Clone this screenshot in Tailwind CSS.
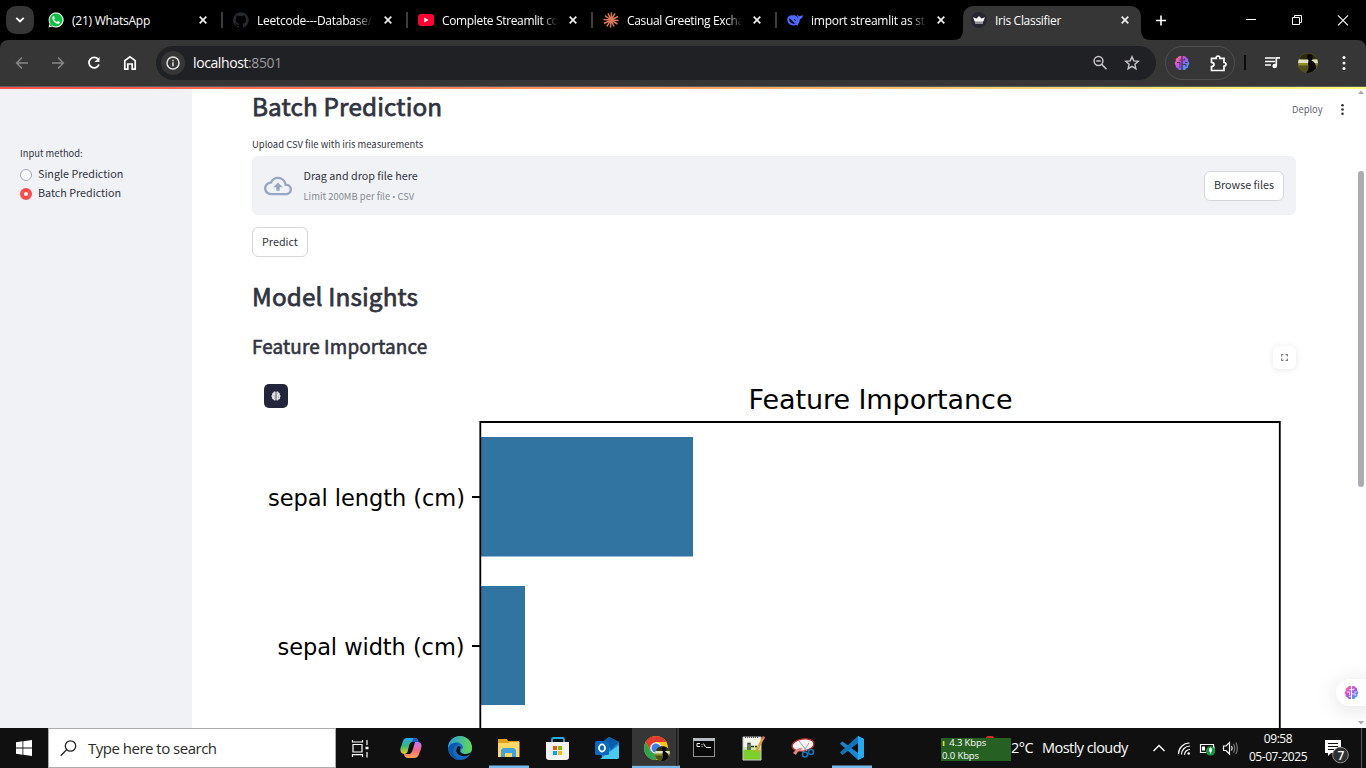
<!DOCTYPE html>
<html lang="en">
<head>
<meta charset="utf-8">
<title>Iris Classifier</title>
<script src="https://cdn.jsdelivr.net/npm/@tailwindcss/browser@4"></script>
</head>
<body class="w-[1366px] h-[768px] overflow-hidden bg-black font-['Open_Sans','Noto_Sans',sans-serif]">
<svg class="absolute w-0 h-0">
  <defs>
    <linearGradient id="brainG" x1="0" y1="0" x2="1" y2="1"><stop offset="0" stop-color="#ff7a3c"/><stop offset=".35" stop-color="#d83fe0"/><stop offset=".65" stop-color="#7d5cf5"/><stop offset="1" stop-color="#2bb5ff"/></linearGradient>
    <linearGradient id="brainH" gradientUnits="userSpaceOnUse" x1="1" y1="2" x2="15" y2="14"><stop offset="0" stop-color="#ff8a3c"/><stop offset=".3" stop-color="#e04fd8"/><stop offset=".55" stop-color="#9a5cf5"/><stop offset="1" stop-color="#2bb5ff"/></linearGradient>
    <symbol id="x" viewBox="0 0 8 8"><path d="M.7.7l6.6 6.6M7.3.7L.7 7.3" stroke="#eee" stroke-width="1.7" fill="none"/></symbol>
    <symbol id="brain" viewBox="0 0 16 16"><path d="M7.400 1.200C5.600.5 4 1.300 3.700 2.700 2 3 1.300 4.700 2 6 .4 7 .3 9.200 1.700 10.200 1.400 12 2.500 13.200 4 13.400 4.600 15 6.300 15.500 7.400 14.600ZM8.600 1.200C10.400.5 12 1.300 12.300 2.700 14 3 14.700 4.700 14 6 15.600 7 15.700 9.200 14.300 10.200 14.600 12 13.500 13.200 12 13.400 11.400 15 9.700 15.500 8.600 14.600Z"/></symbol>
    <symbol id="folds" viewBox="0 0 16 16"><path d="M7.400 5H5.500M3 7.500H6v3M7.400 12H5M8.600 5H10.500V3.500M13.500 7.500H11M8.600 9.500H12v2" fill="none" stroke-width=".9"/></symbol>
    <symbol id="avatar" viewBox="0 0 20 20"><circle cx="10" cy="10" r="10" fill="#8f8c2c"/><path d="M1 6A10 10 0 0 1 19 6L14 7 4 7Z" fill="#2c2c10"/><path d="M.8 6.500H19.200L20 10H0Z" fill="#e2e2c0"/><path d="M.3 12.500H19.700A10 10 0 0 1 .3 12.500Z" fill="#54501a"/><path d="M9.500 2Q13-.5 14.500 3 15 6 13.500 7.500 18 9 18 15A10 10 0 0 1 8 19.800Q12 16 10 11L10.500 7Q8.500 5 9.500 2Z" fill="#0b090b"/></symbol>
  </defs>
</svg>
<div class="flex flex-col h-[768px]">

  <!-- Tab strip -->
  <header class="h-10 flex items-stretch bg-black text-white text-[12px] shrink-0">
    <div class="w-[38px] pl-[6px] pt-[6px] shrink-0"><div class="w-7 h-7 rounded-[10px] bg-[#363636] flex items-center justify-center"><svg width="10" height="6" viewBox="0 0 10 6"><path d="M1.300.8L5 4.500 8.700.8" stroke="#fff" stroke-width="1.800" fill="none"/></svg></div></div>

    <div class="w-[185px] shrink-0 flex items-center pl-[10px] relative">
      <svg class="w-4 h-4 shrink-0" viewBox="0 0 16 16"><path d="M.5 15.500L1.600 11.700A7.500 7.500 0 1 1 4.400 14.500Z" fill="#fff"/><path d="M1.800 14.200L2.500 11.500A6.500 6.500 0 1 1 4.600 13.500Z" fill="#0fc143"/><path d="M5.300 4.100Q4 5 4.400 6.800C5.200 9.500 7.500 11.600 10 11.900Q11.700 11.700 11.900 9.900L10 8.900 9 10Q7 9.200 6 7.200L6.800 6.200 6 4.100Z" fill="#fff"/></svg>
      <span class="ml-2 w-[117px] h-5 leading-[22px] whitespace-nowrap tracking-[-0.250px]">(21) WhatsApp</span>
      <svg class="w-2 h-2 ml-[10px] shrink-0"><use href="#x"/></svg>
      <i class="absolute right-0 top-3 w-[2px] h-4 bg-[#3c3c3c]"></i>
    </div>
    <div class="w-[185px] shrink-0 flex items-center pl-[10px] relative">
      <svg class="w-4 h-4 shrink-0" viewBox="0 0 16 16" fill="#24292f"><path d="M8 .2a8 8 0 0 0-2.500 15.600c.4.1.5-.2.500-.4v-1.500c-2 .4-2.700-.5-2.900-1-.1-.300-.5-1-.8-1.200-.3-.1-.7-.5 0-.5.6 0 1.100.6 1.200.8.700 1.200 1.900.9 2.400.7.1-.5.300-.9.500-1.100-1.800-.2-3.600-.9-3.600-3.900 0-.9.300-1.600.8-2.100-.1-.2-.4-1 .1-2.100 0 0 .7-.2 2.200.8a7.500 7.500 0 0 1 4 0c1.500-1 2.200-.8 2.200-.8.4 1.100.2 1.900.1 2.100.5.600.8 1.300.8 2.100 0 3.100-1.900 3.700-3.700 3.900.3.300.6.7.6 1.500v2.200c0 .2.100.5.6.4A8 8 0 0 0 8 .2Z"/></svg>
      <span class="ml-2 w-[117px] h-5 leading-[22px] overflow-hidden whitespace-nowrap tracking-[-0.250px] [mask-image:linear-gradient(90deg,#000_84%,transparent_99%)]">Leetcode---Database/</span>
      <svg class="w-2 h-2 ml-[10px] shrink-0"><use href="#x"/></svg>
      <i class="absolute right-0 top-3 w-[2px] h-4 bg-[#3c3c3c]"></i>
    </div>
    <div class="w-[185px] shrink-0 flex items-center pl-[10px] relative">
      <svg class="w-4 h-4 shrink-0" viewBox="0 0 16 16"><rect y="2" width="16" height="12" rx="3" fill="#ff0033"/><path d="M6.300 5.500L10.500 8 6.300 10.500Z" fill="#fff"/></svg>
      <span class="ml-2 w-[117px] h-5 leading-[22px] overflow-hidden whitespace-nowrap tracking-[-0.350px] [mask-image:linear-gradient(90deg,#000_84%,transparent_99%)]">Complete Streamlit co</span>
      <svg class="w-2 h-2 ml-[10px] shrink-0"><use href="#x"/></svg>
      <i class="absolute right-0 top-3 w-[2px] h-4 bg-[#3c3c3c]"></i>
    </div>
    <div class="w-[184px] shrink-0 flex items-center pl-[10px] relative">
      <svg class="w-4 h-4 shrink-0" viewBox="0 0 16 16"><path d="M8 8L8.500.4M8 8L12 1.500M8 8L15 4.500M8 8L15.600 8.500M8 8L14.500 12M8 8L11 14.500M8 8L7.500 15.600M8 8L3.800 14.300M8 8L1 11.500M8 8L.4 7.500M8 8L2 3.700M8 8L5 1.200" stroke="#d97757" stroke-width="1.500"/></svg>
      <span class="ml-2 w-[117px] h-5 leading-[22px] overflow-hidden whitespace-nowrap tracking-[-0.350px] [mask-image:linear-gradient(90deg,#000_84%,transparent_99%)]">Casual Greeting Excha</span>
      <svg class="w-2 h-2 ml-[9px] shrink-0"><use href="#x"/></svg>
      <i class="absolute right-0 top-3 w-[2px] h-4 bg-[#3c3c3c]"></i>
    </div>
    <div class="w-[184px] shrink-0 flex items-center pl-[10px]">
      <svg class="w-4 h-4 shrink-0" viewBox="0 0 16 16"><path d="M.2 7.500C.2 4.500 3 2.800 6 3.300 7 3.400 7.500 3 8.500 3.500 10 4.300 10.500 6 11.500 6.500 11 5 9.500 4 10.500 2.500L12 4.200 15.900 3.300C15.800 5.500 14.500 7 12.800 7.400 12.700 9.500 12 11.300 10.800 12.300L11.500 13.400 9 13C4.500 14.500.4 12 .2 7.500Z" fill="#4d6bfe"/><path d="M2 6.500C4.500 6.800 6 10.500 8.800 11.600 4.500 12.400 2 10 2 6.500ZM6.800 7Q8.500 6.800 9 9Q7.500 9 6.800 7Z" fill="#05091c"/></svg>
      <span class="ml-2 w-[117px] h-5 leading-[22px] overflow-hidden whitespace-nowrap tracking-[-0.250px] [mask-image:linear-gradient(90deg,#000_84%,transparent_99%)]">import streamlit as st</span>
      <svg class="w-2 h-2 ml-[9px] shrink-0"><use href="#x"/></svg>
    </div>

    <div class="w-[178px] mt-[6px] ml-[2px] shrink-0 rounded-t-[10px] bg-[#363636] flex items-center pl-2 pb-[6px] relative">
      <svg class="absolute -left-[10px] bottom-0 w-[10px] h-[10px]" viewBox="0 0 10 10"><path d="M10 0V10H0Q10 10 10 0Z" fill="#363636"/></svg>
      <svg class="absolute -right-[10px] bottom-0 w-[10px] h-[10px]" viewBox="0 0 10 10"><path d="M0 0V10H10Q0 10 0 0Z" fill="#363636"/></svg>
      <svg class="w-4 h-4 shrink-0" viewBox="0 0 16 16"><circle cx="8" cy="8" r="8" fill="#262730"/><path d="M2 5.200L5.500 6.500 8 4 10.500 6.500 14 5.200 12.200 9.800H3.800ZM4 10.500H12V11.500H4Z" fill="#f3f3f5"/></svg>
      <span class="ml-2 w-[117px] h-5 leading-[22px] whitespace-nowrap tracking-[-0.300px]">Iris Classifier</span>
      <svg class="w-2 h-2 ml-[9px] shrink-0"><use href="#x"/></svg>
    </div>
    <svg class="w-[225px] h-10 shrink-0" viewBox="1141 0 225 40" fill="none" stroke="#fff"><path d="M1156 20.500H1166M1161 15.500V25.500" stroke-width="1.600"/><path d="M1246 19.500H1256"/><path d="M1292.500 17.500H1299.500V24.500H1292.500ZM1294.500 17V15.500H1301.500V22.500H1300"/><path d="M1338 15.300L1348 25.300M1348 15.300L1338 25.300" stroke-width="1.100"/></svg>
  </header>

  <!-- Toolbar -->
  <nav class="h-[46px] shrink-0 bg-[#363636] rounded-t-lg flex items-center">
    <svg class="w-[156px] h-[46px] shrink-0" viewBox="0 40 156 46" fill="none"><path d="M28 63H17M22 57.500L16.700 63 22 68.500M52 63H63M58 57.500L63.300 63 58 68.500" stroke="#858585" stroke-width="1.600"/><path d="M98.400 59.600A5.200 5.200 0 1 0 99 64.500" stroke="#fff" stroke-width="1.800"/><path d="M99.500 57V62H94.500Z" fill="#fff"/><path d="M124.800 69.200V60.600L130 56.700 135.200 60.600V69.200H132.200V64H127.800V69.200Z" stroke="#fff" stroke-width="1.700"/></svg>
    <div class="w-[1000px] h-[34px] shrink-0 rounded-full bg-[#202124] flex items-center pl-[5px] pr-4">
      <span class="w-6 h-6 rounded-full bg-[#363636] flex items-center justify-center"><svg width="14" height="14" viewBox="0 0 14 14" fill="none" stroke="#e3e3e3" stroke-width="1.500"><circle cx="7" cy="7" r="6"/><path d="M7 6.300V10.200M7 3.800V5.200"/></svg></span>
      <span class="ml-[8px] text-[14px] leading-5 tracking-[-0.400px] text-white">localhost<span class="text-[#9a9b9d]">:8501</span></span>
      <svg class="ml-auto w-4 h-4" viewBox="0 0 16 16" fill="none" stroke="#c7c7c7" stroke-width="1.500"><circle cx="6.500" cy="6" r="4.400"/><path d="M9.700 9.400L14.500 14.200M4.300 6H8.700"/></svg>
      <svg class="ml-4 w-4 h-4" viewBox="0 0 16 16" fill="none" stroke="#c7c7c7" stroke-width="1.400"><path d="M8 1.800L9.800 5.900 14.300 6.300 10.900 9.300 11.900 13.700 8 11.400 4.100 13.700 5.100 9.300 1.700 6.300 6.200 5.900Z"/></svg>
    </div>
    <div class="ml-[9px] w-[70px] h-[34px] shrink-0 rounded-full border border-[#4f4f4f] flex items-center justify-between pl-2 pr-[7px]">
      <svg class="w-4 h-4" viewBox="0 0 16 16" fill="url(#brainH)" stroke="#363636"><use href="#brain" width="16" height="16" stroke="none"/><use href="#folds" width="16" height="16"/></svg>
      <svg class="w-[17px] h-[17px]" viewBox="0 0 17 17"><path d="M1.500 3.300H6.200Q5.800 1.200 8 1.200T9.800 3.300H14V7.500Q16 7.600 16 9.300T14 11.200V15.500H1.500V11.500Q4 11.300 4 9.400T1.500 7.300Z" fill="none" stroke="#fff" stroke-width="1.700"/></svg>
    </div>
    <svg class="w-[131px] h-[46px]" viewBox="1235 40 131 46"><path d="M1245 55V70" stroke="#0c0c0c" stroke-width="2"/><path d="M1265 58H1275M1265 61.500H1275M1265 65H1271" stroke="#fff" stroke-width="1.500"/><path d="M1276.300 66V57.800H1280" stroke="#fff" stroke-width="1.700" fill="none"/><circle cx="1274.700" cy="66" r="2.300" fill="#fff"/><use href="#avatar" x="1298" y="53" width="20" height="20"/><g fill="#fff"><circle cx="1344" cy="57.600" r="1.500"/><circle cx="1344" cy="63" r="1.500"/><circle cx="1344" cy="68.400" r="1.500"/></g></svg>
  </nav>
  <div class="h-px shrink-0 bg-[#5d5d5d]"></div>
  <div class="h-[2px] shrink-0 bg-[linear-gradient(90deg,#ff4b4b,#fffd80)]"></div>

  <!-- Streamlit page -->
  <div class="h-[639px] shrink-0 flex bg-white text-[#31333f] font-['Noto_Sans_CJK_SC',sans-serif] overflow-hidden relative">
    <aside class="w-48 bg-[#f0f2f6] shrink-0 pl-5 pt-[55px] flex flex-col">
      <div class="text-[9.400px] leading-[18px]">Input method:</div>
      <div class="flex items-center mt-[3px] h-[19px] text-[10.750px]"><i class="w-3 h-3 rounded-full border border-[#a3a8b4] bg-white/60 mr-[6px]"></i>Single Prediction</div>
      <div class="flex items-center h-[19px] text-[10.750px]"><i class="w-3 h-3 rounded-full border-4 border-[#ff4b4b] bg-white mr-[6px]"></i>Batch Prediction</div>
    </aside>
    <main class="ml-[60px] w-[1044px] shrink-0 flex flex-col items-start">
      <h2 class="h-9 leading-[34px] text-[24.300px] tracking-[0.150px] font-normal [-webkit-text-stroke:0.750px_#31333f]">Batch Prediction</h2>
      <label class="mt-[10px] h-[18px] leading-[18px] text-[9.430px]">Upload CSV file with iris measurements</label>
      <section class="mt-[3px] w-full h-[59px] rounded-md bg-[#f0f2f6] flex items-center px-3">
        <svg class="w-[28px] h-[28px]" viewBox="0 0 24 24" fill="#97a6c3"><path d="M19.350 10.040A7.490 7.490 0 0 0 12 4C9.110 4 6.600 5.640 5.350 8.040A5.994 5.994 0 0 0 0 14c0 3.310 2.690 6 6 6h13c2.760 0 5-2.240 5-5 0-2.640-2.050-4.780-4.650-4.960zM19 18H6c-2.210 0-4-1.790-4-4 0-2.050 1.530-3.760 3.560-3.970l1.070-.11.5-.95A5.469 5.469 0 0 1 12 6c2.620 0 4.880 1.860 5.390 4.430l.3 1.500 1.530.11A2.980 2.980 0 0 1 22 15c0 1.650-1.350 3-3 3zM8 13h2.550v3h2.900v-3H16l-4-4z"/></svg>
        <div class="ml-[11.500px] pb-px"><div class="text-[10.750px] h-5 leading-5">Drag and drop file here</div><div class="text-[9.430px] h-[18px] leading-5 text-[#31333f]/60">Limit 200MB per file <span class="font-['Roboto'] text-[9px]">•</span> CSV</div></div>
        <button class="ml-auto w-20 h-[30px] rounded-md border border-[#d6d6d9] bg-white text-[10.750px] leading-4 pb-px whitespace-nowrap">Browse files</button>
      </section>
      <button class="mt-3 w-14 h-[30px] rounded-md border border-[#d6d6d9] bg-white text-[10.750px] leading-4 pb-px">Predict</button>
      <h2 class="mt-[22px] h-9 leading-[34px] text-[24.300px] tracking-[0.150px] font-normal [-webkit-text-stroke:0.750px_#31333f]">Model Insights</h2>
      <h3 class="mt-[18px] h-7 leading-[26px] text-[18.900px] tracking-[0.130px] font-normal [-webkit-text-stroke:0.600px_#31333f]">Feature Importance</h3>
      <svg class="mt-[15px] w-[1044px] h-[352px] shrink-0" viewBox="252 376 1044 352" font-family="DejaVu Sans, sans-serif">
        <path d="M480 437H693V556.500H480ZM480 586H525V705H480Z" fill="#3274a1"/>
        <path d="M480.300 740V422H1279.800V740M472 497H480M472 646H480" fill="none" stroke="#000" stroke-width="1.800"/>
        <text x="748.500" y="409" font-size="27" textLength="264">Feature Importance</text>
        <text x="268" y="506" font-size="22.500" textLength="197">sepal length (cm)</text>
        <text x="277.500" y="655" font-size="22.500" textLength="187">sepal width (cm)</text>
      </svg>
    </main>
    <div class="absolute left-[1292px] top-[11px] text-[9.400px] leading-[18px] text-[#31333f]/80">Deploy</div>
    <svg class="absolute left-[1340px] top-[14px] w-[5px] h-[13px]" viewBox="0 0 5 13" fill="#31333f"><circle cx="2.500" cy="2.300" r="1.300"/><circle cx="2.500" cy="6.500" r="1.300"/><circle cx="2.500" cy="10.700" r="1.300"/></svg>
    <div class="absolute left-[1273px] top-[257px] w-[23px] h-[23px] rounded-md bg-white shadow-[0_1px_6px_rgba(0,0,0,0.10)] flex items-center justify-center"><svg width="7" height="7" viewBox="0 0 8 8" fill="none" stroke="#77787f" stroke-width="1.200"><path d="M.7 2.800V.7H2.800M5.200.7H7.300V2.800M7.300 5.200V7.300H5.200M2.800 7.300H.7V5.200"/></svg></div>
    <div class="absolute left-[264px] top-[295px] w-6 h-6 rounded-[5px] bg-[#23253a] flex items-center justify-center"><svg class="w-[10px] h-[10px]" fill="#e6e6ea" stroke="#a5a6b2"><use href="#brain" stroke="none"/><use href="#folds"/></svg></div>
    <div class="absolute left-[1336px] top-[590px] w-[40px] h-[27px] rounded-full bg-white shadow-[0_3px_22px_rgba(0,0,0,0.13)] pl-2 flex items-center"><svg class="w-[15px] h-[15px]" viewBox="0 0 16 16" fill="url(#brainH)" stroke="#fff"><use href="#brain" width="16" height="16" stroke="none"/><use href="#folds" width="16" height="16"/></svg></div>
    <svg class="absolute left-[1357px] top-0 w-[9px] h-[639px]" viewBox="1357 89 9 639" fill="#a9a9ad"><path d="M1358 94L1361 90.500 1364 94ZM1358 721H1364L1361 724.500Z"/><rect x="1358" y="171" width="6" height="316" rx="3" fill="#adadb1"/></svg>
  </div>

  <!-- Taskbar -->
  <footer class="h-10 shrink-0 bg-[#101010] flex items-stretch text-white">
    <div class="w-12 flex items-center justify-center"><svg width="16" height="16" viewBox="0 0 16 16" fill="#fff"><path d="M0 2.200L6.500 1.300V7.500H0ZM7.300 1.200L16 0V7.500H7.300ZM0 8.400H6.500V14.700L0 13.800ZM7.300 8.400H16V16L7.300 14.800Z"/></svg></div>
    <div class="w-72 bg-white border border-[#adadad] flex items-center pl-[11px] text-[#2b2b2b]"><svg width="17" height="17" viewBox="0 0 17 17" fill="none" stroke="#222" stroke-width="1.300"><circle cx="10.500" cy="6" r="5.200"/><path d="M6.600 9.800L.7 15.800"/></svg><span class="ml-[11px] text-[15px] leading-5 tracking-[-0.500px]">Type here to search</span></div>
    <svg class="w-[549px] h-10 shrink-0" viewBox="336 728 549 40">
      <g fill="none" stroke="#fff" stroke-width="1.200"><path d="M353 744.500H362V752H353ZM352.500 740V742H362.500V740M352.500 757V754.700H362.500V757M367 740V745M367 752V757.500"/><path d="M365.500 748H368.500" stroke-width="2.500"/></g>
      <defs><linearGradient id="c1" x2="0" y2="1"><stop stop-color="#2aa8f2"/><stop offset=".5" stop-color="#35b77a"/><stop offset="1" stop-color="#f2d322"/></linearGradient><linearGradient id="c2" x2="0" y2="1"><stop stop-color="#c079f5"/><stop offset=".5" stop-color="#f36a8c"/><stop offset="1" stop-color="#ffa14d"/></linearGradient><linearGradient id="e1" x2="1"><stop stop-color="#279ee5"/><stop offset="1" stop-color="#65d850"/></linearGradient></defs>
      <path d="M407 738H415Q418 738 418.500 742H412Q410 742 409 746L407.500 752Q406.500 754 404 754 399.500 753 400.500 748L403 741Q404 738 407 738Z" fill="url(#c1)"/>
      <path d="M414 738Q417.500 738 418.500 742H412Q413 738 414 738Z" fill="#1958cf"/>
      <path d="M415 742H418Q423 743 421 749L419 754Q418 758 414 758H408Q404.500 758 404 754H410Q412 753 413 749Z" fill="url(#c2)"/>
      <circle cx="460" cy="748" r="12" fill="#1669c1"/><path d="M448 748A12 12 0 0 1 472 748Q472 754 465 754 460 753 461 750 465 747 461 744 456 739 448 748Z" fill="url(#e1)"/><path d="M456 745C450 751 454 759 463 759.600 455 762 448 755 448.500 747Q452 741 458 744Z" fill="#0d57a5"/><path d="M458 746Q454 751 459 755 464 757.500 470 754.500L471 752.500Q463 756 460 752Q459 749 461 747Z" fill="#101010"/>
      <path d="M489 765.500H529V768H489ZM632 765.500H680V768H632ZM832 765.500H872V768H832Z" fill="#76b9ed"/>
      <path d="M498 739H507L508 741H519V746H498Z" fill="#dda315"/><path d="M498 743H508L510 742H519.500V757H498Z" fill="#ffd767"/><path d="M501 757V750L503 748H514L516 750V757H512V753H505V757Z" fill="#439fdc"/>
      <path d="M552 743V739.500Q552 738 553.500 738H562.500Q564 738 564 739.500V743" fill="none" stroke="#25aee4" stroke-width="1.800"/><path d="M546 742H569V757Q569 760 566 760H549Q546 760 546 757Z" fill="#f3f3f4"/><path d="M553 746H557V750H553Z" fill="#f25022"/><path d="M558 746H562V750H558Z" fill="#7fba00"/><path d="M553 751H557V755H553Z" fill="#00a4ef"/><path d="M558 751H562V755H558Z" fill="#ffb900"/>
      <path d="M600 744L609 737 619 742V757Q619 759 617 759H602Z" fill="#1689dc"/><path d="M605 740L609 737 619 742 611 750Z" fill="#0b5dab"/><path d="M600 759L619 745V757Q619 759 617 759Z" fill="#4ac9f3"/><rect x="595" y="741" width="14" height="14" rx="1.500" fill="#0a68bd"/><ellipse cx="602" cy="748" rx="3" ry="3.600" stroke="#fff" stroke-width="1.800" fill="none"/>
      <path d="M632 728H679V765.500H632Z" fill="#363636"/><path d="M676 728H677V765.500H676Z" fill="#1b1b1b"/>
      <circle cx="656" cy="748" r="12" fill="#fbc116"/><path d="M645.600 742A12 12 0 0 1 666.400 742H656L650.800 751Z" fill="#e33b2e"/><path d="M645.600 742A12 12 0 0 0 656 760L661.200 751H650.800Z" fill="#31a350"/><circle cx="656" cy="748" r="5.800" fill="#fff"/><circle cx="656" cy="748" r="4.500" fill="#3b7ded"/><use href="#avatar" x="655" y="746" width="15" height="15"/>
      <rect x="693.500" y="738.500" width="21" height="18" fill="#080808" stroke="#919191"/><path d="M693 738H715V741H693Z" fill="#b9bdc1"/><path d="M700 743.500H697V746.500H700M702 744V745M702 746V747M703.500 743.500L705.500 747M706 747.500H711" stroke="#eee" stroke-width="1" fill="none"/>
      <path d="M743 737H761V760H743Z" fill="#f3f4e9"/><path d="M743 750H761V760H743Z" fill="#7bce2d"/><path d="M743 747H761V750H743Z" fill="#c4e8a0"/><path d="M743 737H761V760H743Z" stroke="#ccc" fill="none"/><path d="M745 737H759" stroke="#555" stroke-dasharray="1 1" stroke-width="2"/><path d="M748 750V743.500H750V750M751 746.500H754M755 746.500H757" stroke="#253a20" stroke-width="1.300" fill="none"/><path d="M763 738L756 752" stroke="#e89d28" stroke-width="2.500"/><path d="M764 736.500L762.500 739.500" stroke="#e5726a" stroke-width="2.500"/>
      <ellipse cx="803" cy="745" rx="11" ry="6" transform="rotate(-9 803 745)" fill="#f5f3f3" stroke="#c4292b" stroke-width="1.300"/><path d="M793 753Q799 746 803 749Q797 751 796 755Z" fill="#d88"/><path d="M799 741L807 751M809 743L803 752" stroke="#9ba4ab"/><circle cx="805" cy="754.500" r="2.500" fill="none" stroke="#1673ba" stroke-width="1.600"/><circle cx="811" cy="752" r="2.500" fill="none" stroke="#1673ba" stroke-width="1.600"/>
      <path d="M858 736L864 739V757L858 760 840 743.500 842.500 741.500 858 753Z" fill="#1488d3"/><path d="M858 736V743L842.500 755 840 752.500Z" fill="#0f75ba"/><path d="M858 736L864 739V757L858 760Z" fill="#29a9ef"/>
    </svg>
    <div class="ml-[56px] w-[70px] mt-[10px] h-[23px] bg-[#266022] text-[9.500px] leading-[12px] pl-px relative whitespace-nowrap"><i class="absolute left-[45px] -top-[2px] w-2 h-[2px] rounded-t-full bg-[#d92c20]"></i><div class="h-[12px] leading-[10px] tracking-[-0.100px]"><b class="text-[#e8ee22] mr-[2px]">ı</b> 4.3 Kbps</div><div class="h-[12px] leading-[12px] tracking-[-0.100px]">0.0 Kbps</div></div>
    <div class="w-[142px] flex items-center text-[14.500px] whitespace-nowrap tracking-[-0.550px]"><span class="w-[31px]">2°C</span><span>Mostly cloudy</span></div>
    <svg class="w-[92px] h-10 shrink-0" viewBox="1153 728 92 40" fill="none" stroke="#fff" stroke-width="1.200"><path d="M1153.500 751L1159 745.500 1164.500 751" stroke-width="1.400"/><path d="M1178.500 754A11 11 0 0 1 1189.500 743M1181.500 754.500A8.500 8.500 0 0 1 1190 746M1184.500 754.800A5.500 5.500 0 0 1 1190 749.500"/><circle cx="1188.700" cy="753.500" r="1.300" fill="#fff" stroke="none"/><path d="M1200.500 744.500H1213.500V752.500H1200.500ZM1214 746.500V750"/><path d="M1202 746.500H1205V750.500H1202Z" fill="#fff" stroke="none"/><circle cx="1210.500" cy="751" r="4.700" fill="#10983b" stroke="none"/><path d="M1210.500 753.500V749M1210.500 748Q1208.500 750 1210.500 752 1212.500 750 1210.500 748Z"/><path d="M1223.500 746H1226L1229.500 742.500V754L1226 750.500H1223.500Z"/><path d="M1231.500 746Q1233 748 1231.500 750.500"/><path d="M1233.500 744Q1236 748 1233.500 752.500M1235.800 742.500Q1239 748 1235.800 754" stroke="#777"/></svg>
    <div class="ml-[2px] w-[62px] flex flex-col items-center text-[12px] leading-[18px] pt-[2px] tracking-[-0.450px] whitespace-nowrap"><span>09:58</span><span>05-07-2025</span></div>
    <svg class="w-[57px] h-10 shrink-0" viewBox="1309 728 57 40"><path d="M1325 740H1341V753H1331L1328 756V753H1325Z" fill="#fff"/><path d="M1328 743.500H1338M1328 746.500H1338M1328 749.500H1334" stroke="#101010"/><circle cx="1340.500" cy="755" r="7.800" fill="#303030" stroke="#8b8b8b"/><text x="1337.500" y="759.500" fill="#fff" font-size="12" font-weight="600">7</text><path d="M1361.500 728V768" stroke="#5c5c5c"/></svg>
  </footer>
</div>
</body>
</html>
